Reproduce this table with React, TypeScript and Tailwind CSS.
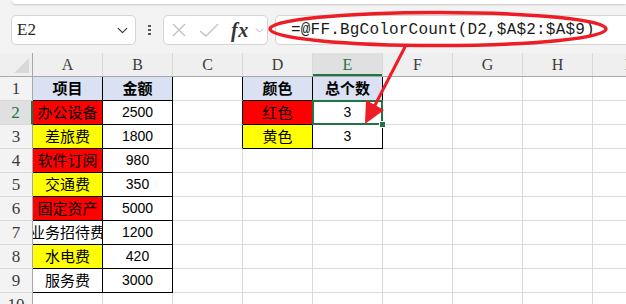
import { ChevronDown } from "lucide-react"

type Cell = { text?: string; bg?: string; bold?: boolean }

const cols = ["A", "B", "C", "D", "E", "F", "G", "H", "I"]

const RED = "bg-[#ff0000]"
const YELLOW = "bg-[#ffff00]"
const HEAD = "bg-[#d9e1f2]"

// sheet contents, row by row (A..E)
const sheet: Cell[][] = [
    [
        { text: "项目", bg: HEAD, bold: true },
        { text: "金额", bg: HEAD, bold: true },
        {},
        { text: "颜色", bg: HEAD, bold: true },
        { text: "总个数", bg: HEAD, bold: true },
    ],
    [{ text: "办公设备", bg: RED }, { text: "2500" }, {}, { text: "红色", bg: RED }, { text: "3" }],
    [{ text: "差旅费", bg: YELLOW }, { text: "1800" }, {}, { text: "黄色", bg: YELLOW }, { text: "3" }],
    [{ text: "软件订阅", bg: RED }, { text: "980" }],
    [{ text: "交通费", bg: YELLOW }, { text: "350" }],
    [{ text: "固定资产", bg: RED }, { text: "5000" }],
    [{ text: "业务招待费" }, { text: "1200" }],
    [{ text: "水电费", bg: YELLOW }, { text: "420" }],
    [{ text: "服务费" }, { text: "3000" }],
    [],
]

// bordered ranges: A1:B9 and D1:E3
const inTable = (r: number, c: number) =>
    (c >= 0 && c <= 1 && r >= 0 && r <= 8) || (c >= 3 && c <= 4 && r >= 0 && r <= 2)

const SEL_ROW = 1
const SEL_COL = 4

const cjk = "font-['Noto_Sans_CJK_SC',sans-serif]"
const serif = "font-['Liberation_Serif',serif]"

function NameBox() {
    return (
        <div className="w-[125px] h-[30px] bg-white border border-[#d4d4d4] rounded-[5px] flex items-center justify-between pl-[5px] pr-[4px]">
            <span className={`${serif} text-[17px] text-[#222]`}>E2</span>
            <ChevronDown size={17} strokeWidth={1.6} className="text-[#333]" />
        </div>
    )
}

function FormulaButtons() {
    return (
        <div className="w-[105px] h-[30px] bg-white border border-[#d4d4d4] rounded-[5px] flex items-center pl-[6px]">
            <svg width="16" height="16" viewBox="0 0 16 16" className="ml-[1px]">
                <path d="M2 2 L14 14 M14 2 L2 14" stroke="#c2c2c2" strokeWidth="1.4" fill="none" />
            </svg>
            <svg width="20" height="16" viewBox="0 0 20 16" className="ml-[12px]">
                <path d="M1 9 L7 14 L19 2" stroke="#c2c2c2" strokeWidth="1.4" fill="none" />
            </svg>
            <span className="ml-[12px] font-['Liberation_Serif',serif] italic font-bold text-[20px] text-[#333] leading-none tracking-[0.5px]">
                fx
            </span>
            <ChevronDown size={13} strokeWidth={1.4} className="ml-[4px] text-[#9a9a9a]" />
        </div>
    )
}

function Toolbar() {
    return (
        <div className="h-[53px] shrink-0 bg-[#f3f3f3] flex flex-col">
            <div className="h-[4px] ml-[12px] bg-white rounded-bl-[8px] shadow-[0_1px_2px_rgba(0,0,0,0.18)]" />
            <div className="mt-[11px] flex items-center pl-[11px]">
                <NameBox />
                <div className="w-[27px] flex flex-col items-center gap-[2px]">
                    <span className="w-[3px] h-[2px] bg-[#555]" />
                    <span className="w-[3px] h-[2px] bg-[#555]" />
                    <span className="w-[3px] h-[2px] bg-[#555]" />
                </div>
                <FormulaButtons />
                <div className="ml-[7px] flex-1 -mr-[10px] h-[30px] bg-white border border-[#d4d4d4] rounded-[5px] flex items-center pl-[15px]">
                    <span className="font-['Liberation_Mono',monospace] text-[16px] tracking-[0.2px] text-[#1a1a1a] whitespace-nowrap">
                        =@FF.BgColorCount(D2,$A$2:$A$9)
                    </span>
                </div>
            </div>
        </div>
    )
}

function ColumnHeader() {
    return (
        <div className="flex h-[24px] shrink-0 bg-[#efefef] border-b border-b-[#a8a8a8]">
            {/* corner with select-all triangle */}
            <div className="w-[33px] shrink-0 border-r border-r-[#a8a8a8] flex items-end justify-end pr-[3px] pb-[3px]">
                <svg width="15" height="15" viewBox="0 0 15 15">
                    <polygon points="15,0 15,15 0,15" fill="#d9d9d9" />
                </svg>
            </div>
            {cols.map((c, i) => {
                const sel = i === SEL_COL
                return (
                    <div
                        key={c}
                        className={`w-[70px] shrink-0 border-r border-r-[#d8d8d8] ${
                            sel ? "bg-[#e0e0e0] text-[#217346] shadow-[inset_0_-2px_0_#217346]" : "text-[#3c3c3c]"
                        } ${serif} text-[16px] flex items-center justify-center`}
                    >
                        {c}
                    </div>
                )
            })}
        </div>
    )
}

function Row({ r }: { r: number }) {
    const cells = sheet[r]
    const selRow = r === SEL_ROW
    return (
        <div className="flex h-[24px] shrink-0">
            <div
                className={`w-[33px] shrink-0 border-b border-b-[#d8d8d8] flex items-center justify-center ${serif} text-[17px] ${
                    selRow
                        ? "bg-[#e0e0e0] text-[#217346] border-r-2 border-r-[#217346]"
                        : "bg-[#f3f3f3] text-[#3c3c3c] border-r border-r-[#a8a8a8]"
                }`}
            >
                {r + 1}
            </div>
            {cols.map((c, ci) => {
                const cell = cells[ci] ?? {}
                const right = inTable(r, ci) || inTable(r, ci + 1) ? "border-r-black" : "border-r-[#dadada]"
                const bottom = inTable(r, ci) || inTable(r + 1, ci) ? "border-b-black" : "border-b-[#dadada]"
                const isNum = cell.text !== undefined && /^\d+$/.test(cell.text)
                const sel = selRow && ci === SEL_COL
                return (
                    <div
                        key={c}
                        className={`w-[70px] shrink-0 border-r ${right} border-b ${bottom} ${
                            cell.bg ?? "bg-white"
                        } relative flex items-center justify-center`}
                    >
                        <div className="w-full h-full overflow-hidden flex items-center justify-center">
                            {cell.text && (
                                <span
                                    className={`whitespace-nowrap text-black ${
                                        isNum ? "font-['Liberation_Sans',sans-serif] text-[14px]" : `${cjk} text-[15px]`
                                    } ${cell.bold ? "font-bold" : ""}`}
                                >
                                    {cell.text}
                                </span>
                            )}
                        </div>
                        {sel && (
                            <>
                                <div className="absolute -top-[1px] -left-[1px] -right-[1px] -bottom-[1px] border-2 border-[#217346] pointer-events-none" />
                                <div className="absolute -right-[4px] -bottom-[4px] w-[7px] h-[7px] bg-[#217346] border border-white z-10" />
                            </>
                        )}
                    </div>
                )
            })}
        </div>
    )
}

export default function App() {
    return (
        <div className="w-[626px] h-[304px] overflow-hidden bg-white relative flex flex-col">
            <Toolbar />
            <ColumnHeader />
            {sheet.map((_, r) => (
                <Row key={r} r={r} />
            ))}

            {/* red callout: ellipse round the formula and arrow to E2 */}
            <svg
                className="absolute inset-0 pointer-events-none z-20"
                width="626"
                height="304"
                viewBox="0 0 626 304"
            >
                <ellipse cx="438" cy="29" rx="168" ry="16.5" fill="none" stroke="#ee1c24" strokeWidth="3.5" />
                <line x1="406" y1="45" x2="373" y2="109" stroke="#ee1c24" strokeWidth="3" />
                <polygon points="365,124 366,100 384,110" fill="#ee1c24" />
            </svg>
        </div>
    )
}
